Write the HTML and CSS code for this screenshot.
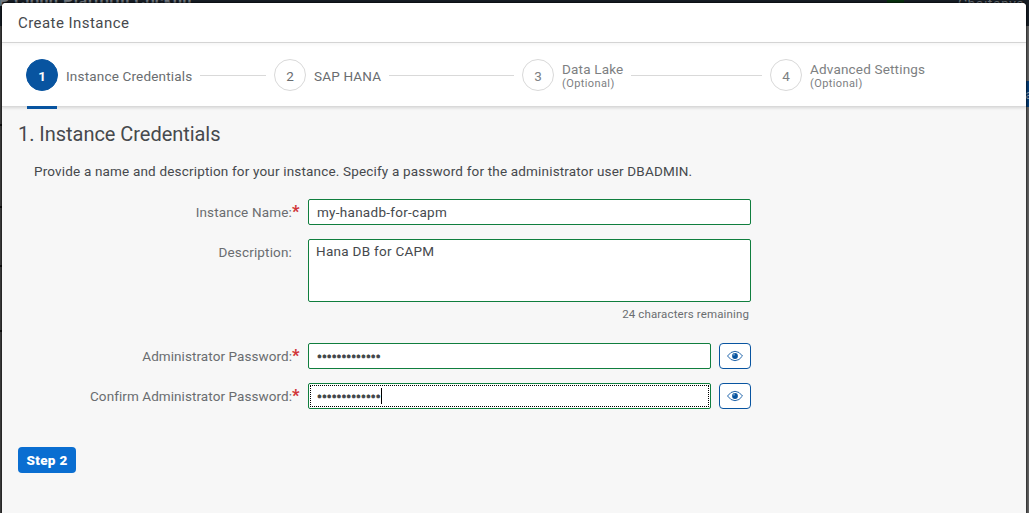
FILE: index.html
```html
<!DOCTYPE html>
<html lang="en">
<head>
<meta charset="utf-8">
<title>Create Instance</title>
<link rel="stylesheet" href="styles.css">
</head>
<body>
<div class="backdrop">
  <div class="shellbar"><span class="shell-title">P Cloud Platform Cockpit</span><span class="shell-status"></span><span class="shell-user">Chaitanya</span></div>
  <div class="edge-button">a</div>
  <i class="rule r1"></i><i class="rule r2"></i><i class="rule r3"></i><i class="rule r4"></i>
</div>
<main class="dialog">
  <header class="dialog-header"><span>Create Instance</span></header>
  <nav class="wizard">
    <div class="step active"><span class="circle">1</span><span class="label">Instance Credentials</span><span class="line"></span></div>
    <div class="step"><span class="circle">2</span><span class="label">SAP HANA</span><span class="line"></span></div>
    <div class="step"><span class="circle">3</span><span class="label two"><span>Data Lake</span><small>(Optional)</small></span><span class="line"></span></div>
    <div class="step"><span class="circle">4</span><span class="label two"><span>Advanced Settings</span><small>(Optional)</small></span></div>
  </nav>
  <section class="content">
    <h1>1. Instance Credentials</h1>
    <p class="intro">Provide a name and description for your instance. Specify a password for the administrator user DBADMIN.</p>
    <div class="row">
      <label class="short"><span>Instance Name:</span><b>*</b></label>
      <div class="field"><span>my-hanadb-for-capm</span></div>
    </div>
    <div class="row area-row">
      <label class="short"><span>Description:</span><b></b></label>
      <div class="field area"><span>Hana DB for CAPM</span></div>
    </div>
    <div class="counter"><span>24 characters remaining</span></div>
    <div class="row">
      <label><span>Administrator Password:</span><b>*</b></label>
      <div class="field password"><span class="dots">•••••••••••••</span></div>
      <button class="eye"><svg viewBox="0 0 16 12" width="16" height="12"><path d="M.5 6Q3.800 1.300 8 1.300T15.500 6Q12.200 10.700 8 10.700T.5 6Z" fill="none" stroke="#0854a0" stroke-width=".9"/><circle cx="8" cy="6" r="2.900" fill="#0854a0"/><path d="M8 3.300A2.600 2.600 0 0 0 5.400 5.500H8Z" fill="#5f92c2"/></svg></button>
    </div>
    <div class="row">
      <label><span>Confirm Administrator Password:</span><b>*</b></label>
      <div class="field password focused"><span class="dots">•••••••••••••</span><i class="caret"></i></div>
      <button class="eye"><svg viewBox="0 0 16 12" width="16" height="12"><path d="M.5 6Q3.800 1.300 8 1.300T15.500 6Q12.200 10.700 8 10.700T.5 6Z" fill="none" stroke="#0854a0" stroke-width=".9"/><circle cx="8" cy="6" r="2.900" fill="#0854a0"/><path d="M8 3.300A2.600 2.600 0 0 0 5.400 5.500H8Z" fill="#5f92c2"/></svg></button>
    </div>
    <button class="next">Step 2</button>
  </section>
</main>
</body>
</html>
```
FILE: styles.css
```css
* { box-sizing: border-box; }
body { margin: 0; height: 513px; overflow: hidden; position: relative; background: #5c5c5c; font: 13.5px/20px Roboto, sans-serif; color: #46494d; }
.backdrop { position: absolute; inset: 0; overflow: hidden; background: linear-gradient(90deg, #444 0 2px, #626262 2px); }
.shellbar { position: relative; height: 26px; background: #171e26; color: #727980; }
.shell-title { position: absolute; left: -1px; top: -7px; font: bold 16px/16px Roboto, sans-serif; letter-spacing: .5px; white-space: nowrap; }
.shell-status { position: absolute; left: 887px; top: 0; width: 17px; height: 3px; background: #08320f; }
.shell-user { position: absolute; left: 958px; top: -4px; font-size: 14px; line-height: 16px; letter-spacing: .5px; }
.edge-button { position: absolute; right: 0; top: 81px; width: 4px; height: 26px; line-height: 26px; background: #043c76; color: #8499b0; overflow: hidden; }
.rule { position: absolute; left: 0; width: 2px; height: 2px; background: #111; }
.r1 { top: 124px; } .r2 { top: 206px; } .r3 { top: 265px; } .r4 { top: 330px; }
.dialog { position: relative; margin: 0 3px 0 2px; top: 3px; height: 510px; background: #f7f7f7; border-radius: 4px 4px 0 0; overflow: hidden; box-shadow: 0 0 2px 1px #0009; }
.dialog-header { height: 40px; display: flex; align-items: center; padding-left: 16px; background: #fff; border-bottom: 1px solid #d9d9d9; }
.dialog-header span { font-size: 15px; letter-spacing: .45px; }
.wizard { height: 64px; background: linear-gradient(#f7f7f7, #fff 4px); border-bottom: 1px solid #d9d9d9; display: flex; padding-left: 24px; box-shadow: 0 1px 3px #0002; position: relative; }
.step { width: 248px; display: flex; align-items: center; color: #6a6d70; position: relative; }
.circle { width: 32px; height: 32px; flex: none; border: 1px solid #d9d9d9; border-radius: 50%; display: grid; place-items: center; background: #fff; padding-top: 2px; }
.active .circle { background: #0854a0; border-color: #0854a0; color: #fff; font-weight: bold; }
.active::after { content: ""; position: absolute; left: 1px; bottom: -3px; width: 30px; height: 3px; background: #0854a0; }
.label { margin-left: 8px; white-space: nowrap; padding-top: 2px; letter-spacing: .18px; }
.two { display: grid; line-height: 16px; padding-top: 1px; }
.two small { font-size: 11px; line-height: 14px; margin-bottom: -2px; letter-spacing: .4px; }
.step:nth-child(n+3) { color: #7d8082; }
.line { flex: 1; height: 1px; margin: 1px 8px 0; background: #d9d9d9; }
.content { padding: 15px 16px 0; }
h1 { margin: 0; font-size: 20px; font-weight: 400; line-height: 24px; letter-spacing: -.04px; }
.intro { margin: 15px 0 18px 16px; line-height: 20px; height: 20px; white-space: nowrap; letter-spacing: .175px; }
.row { display: flex; gap: 8px; height: 26px; margin-bottom: 14px; }
label { width: 282px; display: flex; justify-content: flex-end; align-items: center; height: 26px; color: #6a6d70; white-space: nowrap; letter-spacing: .07px; }
.short { letter-spacing: .16px; }
label b { width: 8px; color: #d13438; font-size: 16px; font-weight: 900; }
.field { width: 443px; height: 26px; border: 1px solid #107e3e; border-radius: 2px; background: #fff; padding: 0 8px; display: flex; align-items: center; position: relative; letter-spacing: .28px; }
.area-row { height: 63px; margin-bottom: 3px; }
.area { height: 63px; align-items: flex-start; padding: 1px 7px; }
.counter { width: 731px; height: 18px; margin-bottom: 20px; font-size: 11.5px; letter-spacing: .13px; line-height: 18px; color: #6a6d70; display: flex; justify-content: flex-end; }
.password { width: 403px; }
.dots { font-family: "Noto Sans", sans-serif; font-size: 13px; letter-spacing: 0; -webkit-text-stroke: .7px #32363a; }
.focused::before { content: ""; position: absolute; inset: 1px; border: 1px dotted #000; }
.caret { width: 1px; height: 16px; background: #000; }
.eye { width: 32px; height: 26px; padding: 0; border: 1px solid #0854a0; border-radius: 4px; background: #fff; display: grid; place-items: center; }
.next { margin-top: 24px; width: 58px; height: 26px; padding: 0; border: 0; border-radius: 4px; background: #0a6ed1; color: #fff; font: 900 13.5px/26px Roboto, sans-serif; letter-spacing: .3px; }
```
